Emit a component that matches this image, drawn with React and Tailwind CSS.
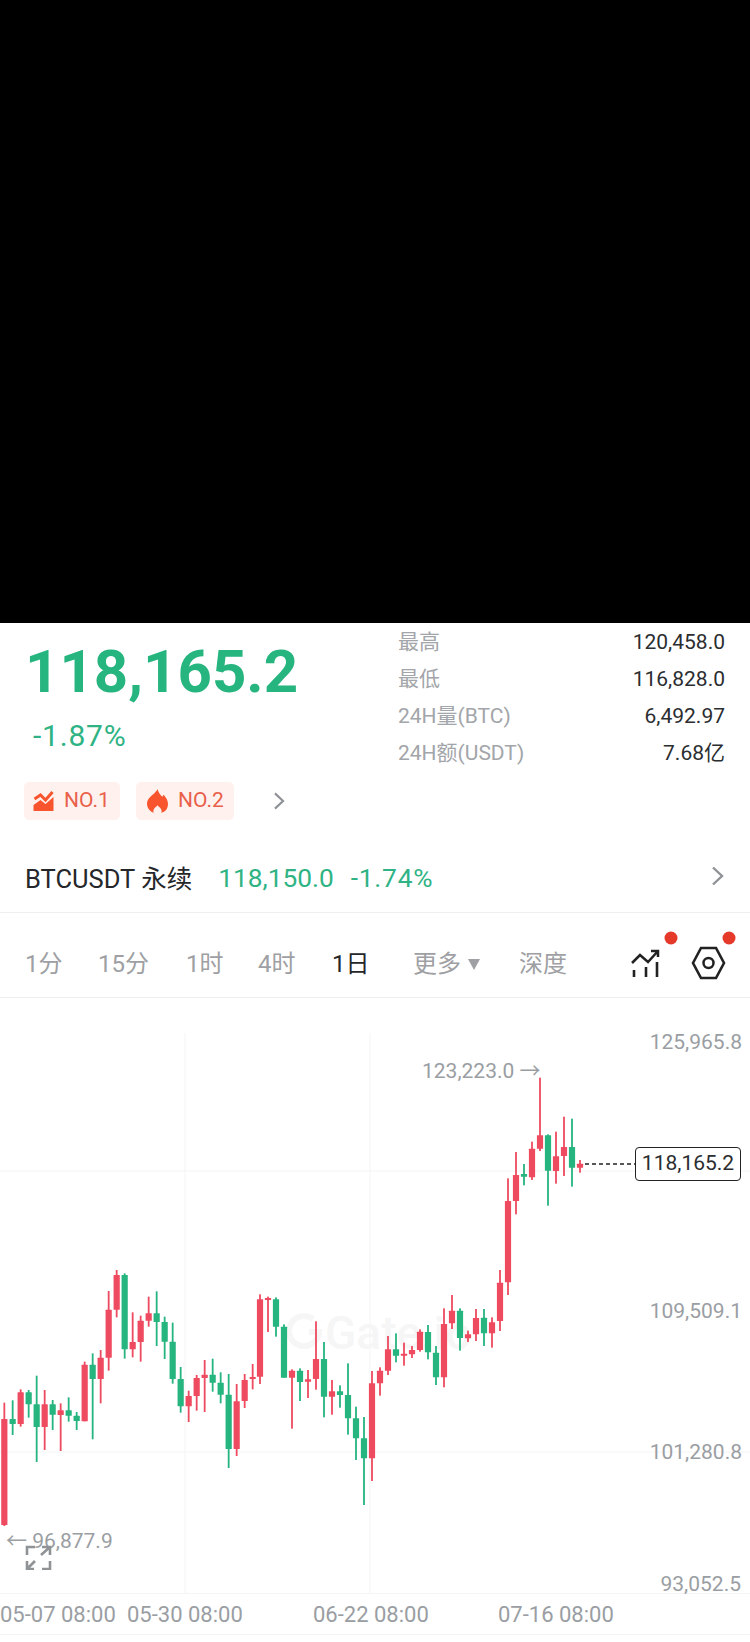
const RED = "#ee4a60";
const GREEN = "#26b47f";

// candles: x, colour, wick top, body top, body bottom, wick bottom (read off 3x crops)
const left = [
  [13, "r", 488, 537, 855, 858], [38, "g", 481, 537, 552, 585], [62, "r", 448, 457, 552, 560],
  [86, "g", 450, 457, 493, 533], [110, "g", 407, 493, 561, 666], [134, "r", 450, 493, 561, 630],
  [158, "g", 480, 493, 524, 570], [182, "r", 490, 511, 525, 633], [206, "g", 472, 511, 527, 545],
  [230, "g", 516, 527, 543, 570], [254, "r", 365, 374, 544, 544], [278, "g", 340, 374, 417, 598],
  [302, "r", 330, 353, 417, 490], [326, "r", 153, 209, 353, 392], [350, "r", 90, 105, 209, 232],
  [374, "g", 100, 105, 328, 356], [398, "r", 217, 306, 328, 352], [422, "r", 227, 242, 306, 365],
  [446, "r", 170, 220, 242, 260], [470, "g", 154, 220, 246, 318], [494, "g", 230, 246, 305, 357],
  [518, "g", 248, 305, 417, 431], [542, "g", 381, 417, 499, 518], [566, "r", 452, 468, 499, 546],
  [590, "r", 405, 414, 468, 512], [614, "r", 360, 404, 414, 516], [638, "g", 356, 404, 428, 455],
  [662, "g", 397, 428, 464, 490], [686, "g", 402, 464, 627, 684], [710, "r", 432, 484, 627, 648],
  [734, "r", 402, 420, 483, 504],
];
const middle = [
  [8, "r", 372, 411, 416, 448], [30, "r", 163, 178, 410, 432], [54, "r", 170, 174, 178, 276],
  [78, "g", 172, 178, 260, 290], [102, "g", 253, 260, 413, 413], [126, "r", 388, 392, 413, 566],
  [150, "g", 385, 392, 426, 483], [174, "r", 390, 418, 425, 474], [198, "r", 244, 357, 417, 449],
  [222, "g", 306, 357, 470, 532], [246, "r", 420, 454, 470, 524], [270, "g", 436, 454, 465, 503],
  [294, "g", 370, 465, 535, 584], [318, "g", 500, 535, 595, 660], [342, "g", 531, 595, 655, 795],
  [366, "r", 393, 430, 655, 723], [390, "r", 382, 392, 430, 467], [414, "r", 288, 328, 392, 405],
  [438, "g", 280, 328, 347, 367], [462, "r", 308, 341, 346, 377], [486, "r", 318, 330, 343, 354],
  [510, "r", 268, 275, 330, 335], [534, "g", 255, 276, 337, 358], [558, "g", 318, 338, 412, 435],
  [582, "r", 205, 252, 412, 442], [606, "r", 165, 212, 250, 267], [630, "g", 205, 212, 294, 332],
  [654, "r", 272, 283, 295, 306], [678, "r", 207, 234, 283, 303], [702, "g", 207, 233, 280, 318],
  [726, "r", 232, 247, 280, 323],
];
const right = [
  [60, "r", 660, 698, 813, 843], [84, "r", 385, 453, 697, 735], [108, "r", 306, 375, 453, 493],
  [132, "g", 342, 372, 380, 406], [156, "r", 275, 296, 382, 390], [180, "r", 83, 256, 296, 303],
  [204, "g", 253, 256, 362, 467], [228, "r", 245, 319, 363, 401], [252, "r", 200, 291, 318, 378],
  [276, "g", 206, 291, 353, 410], [300, "r", 330, 341, 353, 368],
];

const place = (rows, x0, y0) =>
  rows.map(([x, c, wt, bt, bb, wb]) => ({
    x: x0 + x / 3,
    color: c === "r" ? RED : GREEN,
    wt: y0 + wt / 3,
    bt: y0 + bt / 3,
    bb: y0 + bb / 3,
    wb: y0 + wb / 3,
  }));

const candles = [...place(left, 0, 1240), ...place(middle, 250, 1240), ...place(right, 480, 1050)];

const stats = [
  ["最高", "120,458.0"],
  ["最低", "116,828.0"],
  ["24H量(BTC)", "6,492.97"],
  ["24H额(USDT)", "7.68亿"],
];

const tabs = [
  { label: "1分", width: "w-[73px]" },
  { label: "15分", width: "w-[88px]" },
  { label: "1时", width: "w-[72px]" },
  { label: "4时", width: "w-[74px]" },
];

function Chevron({ className }) {
  return (
    <svg className={className} viewBox="0 0 13 20" fill="none" stroke="#8f9296" strokeWidth="2.4">
      <path d="M2 1.5l9 8.5-9 8.5" />
    </svg>
  );
}

function Candles() {
  return (
    <svg className="absolute inset-0 w-full h-full" viewBox="0 998 750 595">
      <path d="M185 1033V1593M370 1033V1593M0 1171H750M0 1452H750" stroke="#f3f4f5" strokeWidth="1" />
      <path d="M313 1319a15 15 0 1 0 6 13h-10" fill="none" stroke="#f6f6f6" strokeWidth="6" />
      {candles.map((c, i) => (
        <g key={i} fill={c.color}>
          <rect x={c.x - 0.9} y={c.wt} width="1.8" height={c.wb - c.wt} />
          <rect x={c.x - 3.1} y={c.bt} width="6.2" height={Math.max(c.bb - c.bt, 2)} rx="0.5" />
        </g>
      ))}
      <path d="M585 1164H635" stroke="#222" strokeWidth="1.3" strokeDasharray="4 3" />
    </svg>
  );
}

export default function App() {
  return (
    <div className="w-[750px] h-[1642px] bg-white overflow-hidden font-['Roboto','Noto_Sans_CJK_SC',sans-serif]">
      <div className="h-[623px] bg-black" />

      <div className="flex h-[197px]">
        <div className="w-[398px] pl-6 pt-[13px]">
          <div className="pl-[1px] text-[60px] leading-[72px] font-bold text-[#26b47f]">118,165.2</div>
          <div className="pl-[9px] mt-[10px] text-[30px] leading-[36px] tracking-[0.8px] text-[#2fb384]">-1.87%</div>
          <div className="flex items-center mt-[28px]">
            <div className="flex items-center w-[96px] h-[38px] pl-[9px] gap-[10px] rounded-[5px] bg-[#fff2ee]">
              <svg className="w-[21px] h-[20px]" viewBox="0 0 20 20">
                <path d="M1 8l6-4 5 5 7-8" fill="none" stroke="#f8552f" strokeWidth="3" />
                <path d="M0 14l7-5 5 4 8-7v14H0z" fill="#f8552f" />
              </svg>
              <span className="text-[21px] text-[#e9604a]">NO.1</span>
            </div>
            <div className="flex items-center w-[98px] h-[38px] ml-[16px] pl-[11px] gap-[10px] rounded-[5px] bg-[#fff2ee]">
              <svg className="w-[21px] h-[24px]" viewBox="0 0 22 25" fill="#f8552f">
                <path d="M11 0c1 4 3 6 5 8l1.5-2C20 9 22 12 22 15.5 22 21 19 24 15 25c.5-1.5.5-3-.5-4.5-1-1.500-2.500-2-3.500-3.500-1 1.500-2.500 2-3.500 3.500-1 1.500-1 3-.5 4.500C4 24 0 20.500 0 15.500 0 9.500 5 7 8 4c1.500-1.500 2.500-2.500 3-4z" />
              </svg>
              <span className="text-[21px] text-[#e9604a]">NO.2</span>
            </div>
            <Chevron className="w-[12px] h-[18px] ml-[39px]" />
          </div>
        </div>

        <div className="flex-1 pr-[25px] pt-[1px]">
          {stats.map(([label, value]) => (
            <div key={label} className="flex justify-between items-center h-[37px]">
              <span className="text-[21px] text-[#a2a5a9]">{label}</span>
              <span className="text-[21px] text-[#2b2d30]">{value}</span>
            </div>
          ))}
        </div>
      </div>

      <div className="mt-[26px] flex items-center h-[67px] pl-[25px] pr-[26px] border-b border-[#eeeff0]">
        <span className="text-[25.5px] text-[#25272a]">BTCUSDT 永续</span>
        <span className="ml-[26px] text-[26.3px] text-[#2fb384]">118,150.0</span>
        <span className="ml-[17px] text-[26.3px] tracking-[0.8px] text-[#2fb384]">-1.74%</span>
        <Chevron className="ml-auto w-[13px] h-[20px] -mt-[6px]" />
      </div>

      <div className="flex items-center h-[85px] pl-[25px] pt-[18px] border-b border-[#eeeff0] text-[24px] text-[#9ea0a3]">
        {tabs.map((tab) => (
          <span key={tab.label} className={tab.width}>{tab.label}</span>
        ))}
        <span className="w-[81px] text-[#25272a]">1日</span>
        <span className="w-[106px] flex items-center gap-[7px]">
          更多
          <svg className="w-[12px] h-[11px]" viewBox="0 0 12 11" fill="#9ea0a3">
            <path d="M0 0h12L6 11z" />
          </svg>
        </span>
        <span className="w-[111px]">深度</span>
        <svg className="w-[110px] h-[50px] -mt-[18px]" viewBox="630 930 110 50" fill="none" stroke="#222" strokeWidth="2.5">
          <path d="M634 977v-7M646 977v-10M657 977v-15" strokeWidth="2.6" />
          <path d="M632 963l8-8 8 7 10-11M651 951h7v6" />
          <path d="M693 963l8-15h15l8 15-8 15h-15z" strokeWidth="2.6" />
          <circle cx="708.500" cy="963" r="5" />
          <circle cx="671" cy="938" r="6.500" fill="#e5392a" stroke="none" />
          <circle cx="729" cy="938" r="6.500" fill="#e5392a" stroke="none" />
        </svg>
      </div>

      <div className="relative h-[595px] text-[21px] text-[#9a9ea3]">
        <div className="absolute left-[325px] top-[308px] text-[46px] leading-[54px] font-medium text-[#f6f6f6]">Gate.io</div>
        <Candles />
        <span className="absolute right-[8px] top-[29px]">125,965.8</span>
        <span className="absolute right-[8px] top-[298px]">109,509.1</span>
        <span className="absolute right-[8px] top-[439px]">101,280.8</span>
        <span className="absolute right-[9px] top-[571px]">93,052.5</span>
        <span className="absolute left-[422px] top-[58px]">123,223.0 →</span>
        <span className="absolute left-[6px] top-[528px]">← 96,877.9</span>
        <div className="absolute left-[635px] top-[149px] flex items-center justify-center w-[106px] h-[34px] rounded-[4px] border-[1.5px] border-[#222] bg-white text-[21px] text-[#2b2d30]">
          118,165.2
        </div>
        <svg className="absolute left-[25px] top-[546px] w-[28px] h-[26px]" viewBox="25 1544 28 26" fill="none" stroke="#909396" strokeWidth="2.6">
          <path d="M27 1555v-8h8M41 1555l9-8M42 1547h8v8M27 1561v8h7M27 1569l8-8M50 1561v8h-8" />
        </svg>
      </div>

      <div className="flex items-center h-[42px] border-t border-b border-[#f3f4f5] text-[22px] text-[#9a9ea3]">
        <span className="w-[127px]">05-07 08:00</span>
        <span className="w-[186px]">05-30 08:00</span>
        <span className="w-[185px]">06-22 08:00</span>
        <span>07-16 08:00</span>
      </div>
    </div>
  );
}
